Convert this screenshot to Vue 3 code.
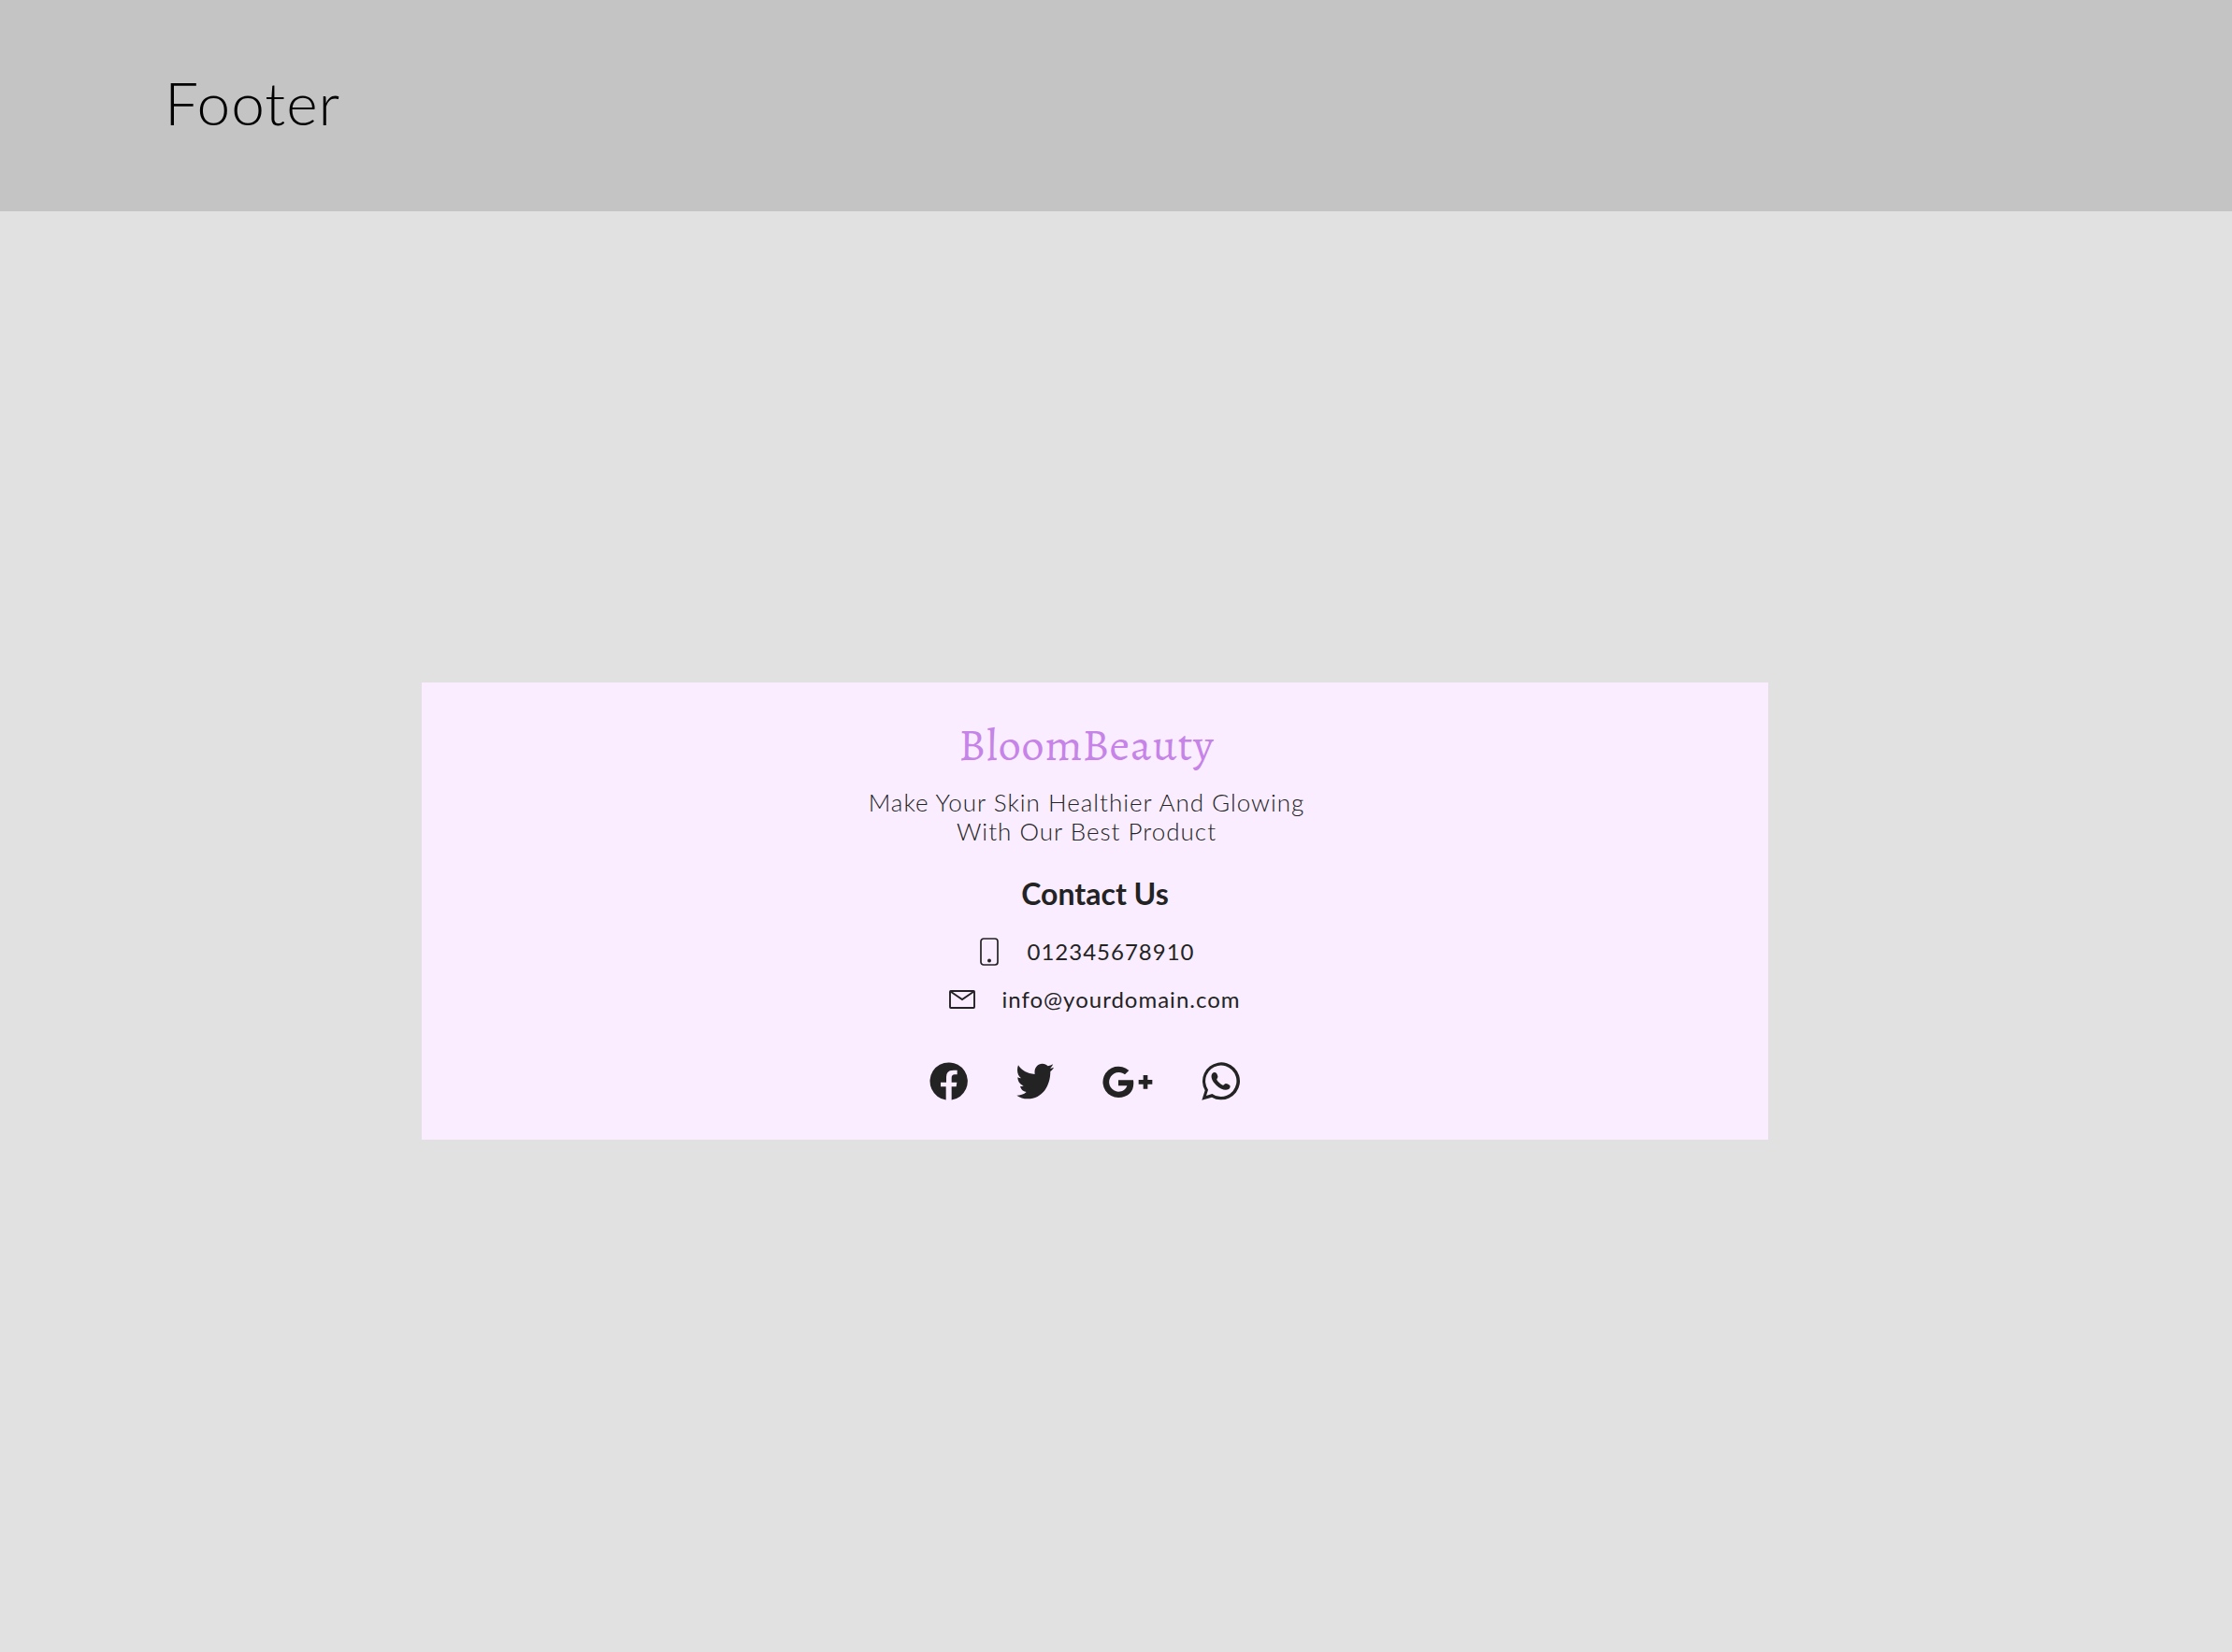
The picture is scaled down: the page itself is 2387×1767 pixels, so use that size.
<script setup>
const phone = '012345678910'
const email = 'info@yourdomain.com'
</script>

<template>
  <div class="page">
    <header class="banner">
      <h1>Footer</h1>
    </header>
    <main class="stage">
      <footer class="card">
        <div class="brand">
          <p class="logo">BloomBeauty</p>
          <p class="tagline">Make Your Skin Healthier And Glowing<br />With Our Best Product</p>
        </div>
        <h2>Contact Us</h2>
        <address class="contacts">
          <a class="contact phone" :href="`tel:${phone}`">
            <svg width="20" height="30" viewBox="0 0 20 30" aria-hidden="true">
              <rect x="1" y="1" width="18" height="28" rx="3" fill="none" stroke="currentColor" stroke-width="1.7" />
              <circle cx="10" cy="24.4" r="2" fill="currentColor" />
            </svg>
            <span>{{ phone }}</span>
          </a>
          <a class="contact email" :href="`mailto:${email}`">
            <svg width="28" height="20" viewBox="0 0 28 20" aria-hidden="true">
              <rect x="1" y="1" width="26" height="18" rx="0.8" fill="none" stroke="currentColor" stroke-width="1.9" />
              <path d="M1.5 1.5L14 10L26.5 1.5" fill="none" stroke="currentColor" stroke-width="1.9" />
            </svg>
            <span>{{ email }}</span>
          </a>
        </address>
        <nav class="socials" aria-label="Social media">
          <a href="#" aria-label="Facebook">
            <svg width="41" height="41" viewBox="45 47 123 123" aria-hidden="true">
              <path d="M98 168.500A60.500 60.500 0 1 1 116 168.500V126H131L133 112H116V98Q116 87 126 87H134V73H123Q99 73 99 95V112H81V126H98Z" />
            </svg>
          </a>
          <a href="#" aria-label="Twitter">
            <svg width="40" height="39" viewBox="317 51 120 117" aria-hidden="true">
              <path d="M323 58C333 75 352 85 376 87C373 68 384 53 400 53C408 53 413 56 418 61C424 60 429 58 434 55C432 61 429 65 425 68C429 68 433 67 437 65C434 71 430 75 426 78C426 124 401 166 353 166C340 166 328 162 318 155C329 155 341 152 349 144C338 142 331 135 329 125C333 126 337 126 340 124C329 121 321 110 321 97C324 99 328 100 332 100C320 90 317 73 323 58Z" />
            </svg>
          </a>
          <a href="#" aria-label="Google Plus">
            <svg width="54" height="34" viewBox="56 57 162 102" aria-hidden="true">
              <path d="M107 103H155C160 135 142 159 107 159A50 50 0 1 1 141 72L128 85A31 31 0 1 0 107 140C121 140 131 133 135 121H107Z" />
              <path d="M187 87H201V102H216V116H201V131H187V116H172V102H187Z" />
            </svg>
          </a>
          <a href="#" aria-label="WhatsApp">
            <svg width="41" height="41" viewBox="375 47 123 123" aria-hidden="true">
              <path fill-rule="evenodd" d="M376 169L386 138A60 60 0 1 1 408 160ZM390 155L409 149A50 50 0 1 0 396 136Z" />
              <path d="M410 83C414 79 420 80 423 83C426 88 428 93 427 96C426 100 423 101 424 104C428 111 436 118 443 121C447 122 449 116 453 116C458 117 464 120 466 122C468 126 466 132 462 134C451 140 436 134 422 121C409 109 402 92 410 83Z" />
            </svg>
          </a>
        </nav>
      </footer>
    </main>
  </div>
</template>

<style>
body {
  margin: 0;
}
</style>

<style scoped>
.page {
  min-height: 100vh;
  background: #e1e1e1;
  color: #232323;
  font-family: Lato, "Liberation Sans", sans-serif;
}
h1, h2, p {
  margin: 0;
}
a {
  color: inherit;
  text-decoration: none;
}
svg {
  display: block;
  flex: none;
  fill: currentColor;
}
.banner {
  padding: 71px 176px 78px;
  background: #c4c4c4;
  color: #000;
}
h1 {
  font-size: 64px;
  line-height: 77px;
  font-weight: 300;
  letter-spacing: 1px;
}
.stage {
  padding: 504px 496px 0 451px;
}
.card {
  display: flex;
  flex-direction: column;
  align-items: center;
  padding: 38px 24px 42px;
  background: #faedff;
}
.brand {
  padding-right: 18px;
  text-align: center;
}
.logo {
  color: #c683e8;
  font-family: Alegreya, "Liberation Serif", serif;
  font-size: 48px;
  line-height: 58px;
  letter-spacing: 1px;
}
.tagline {
  margin-top: 17px;
  font-size: 26px;
  line-height: 31px;
  font-weight: 300;
  letter-spacing: 1px;
}
h2 {
  margin-top: 32px;
  font-size: 32px;
  line-height: 38px;
  font-weight: 700;
}
.contacts {
  display: flex;
  flex-direction: column;
  align-items: center;
  gap: 21px;
  margin-top: 28px;
  font-size: 24px;
  line-height: 30px;
  font-style: normal;
  letter-spacing: 1px;
}
.contact {
  display: flex;
  align-items: center;
}
.phone {
  gap: 30px;
  padding-right: 16px;
}
.email {
  gap: 28px;
}
.socials {
  display: flex;
  align-items: center;
  gap: 52px;
  margin-top: 52px;
  padding-right: 22px;
}
</style>
